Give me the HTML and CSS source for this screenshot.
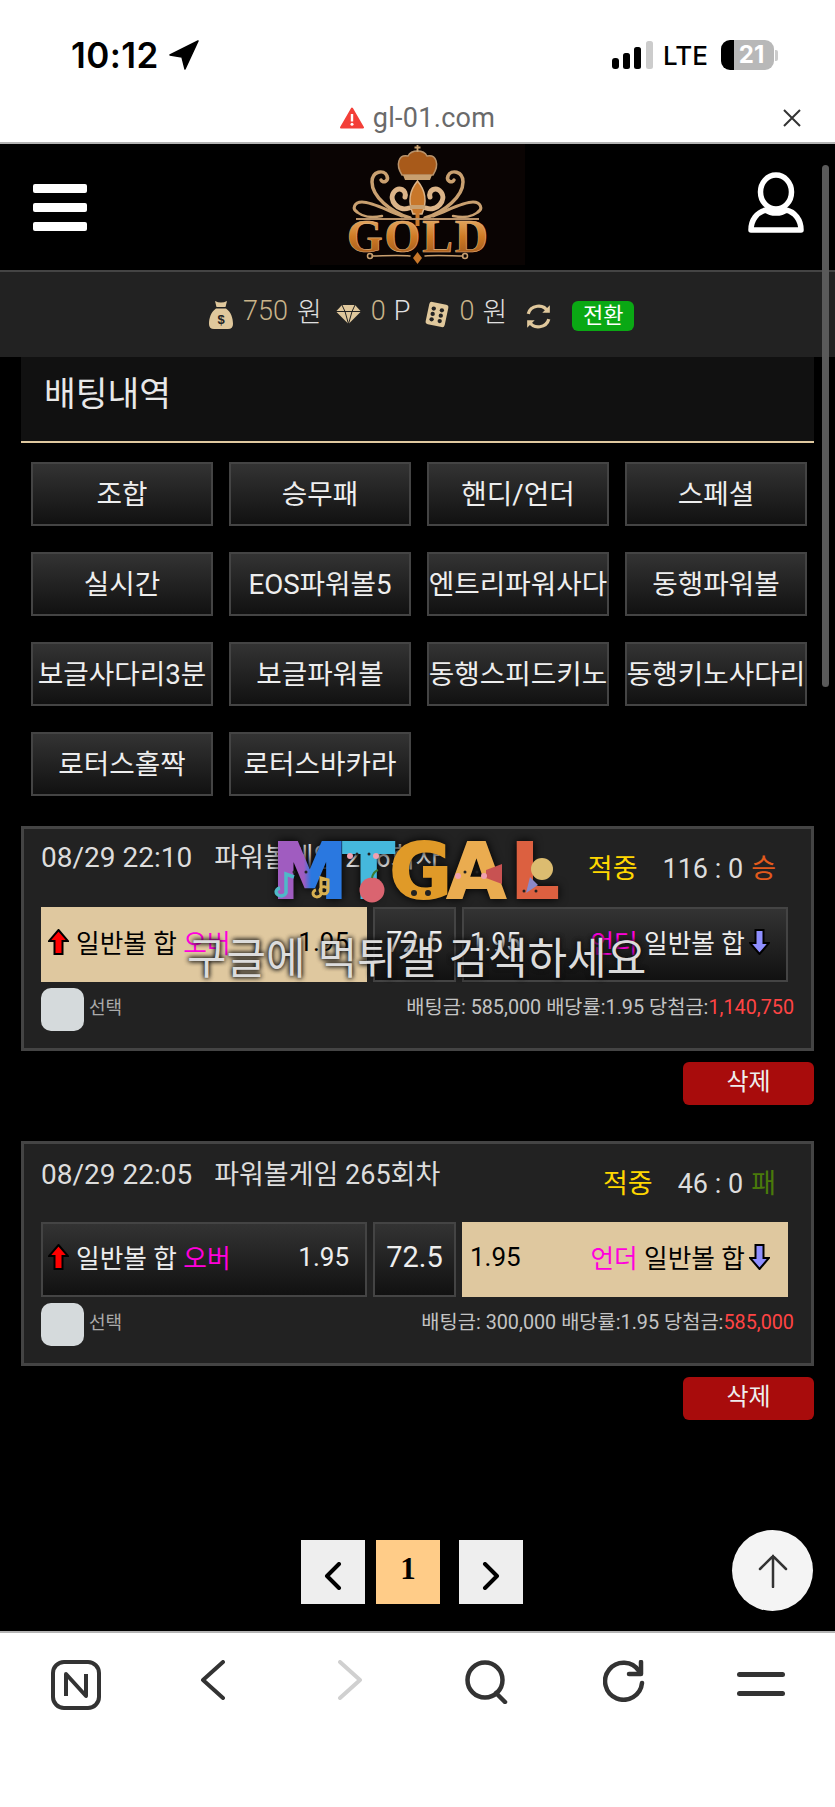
FILE: index.html

```html
<!DOCTYPE html>
<html lang="ko">
<head>
  <meta charset="UTF-8" />
  <meta name="viewport" content="width=device-width, initial-scale=1.0" />
  <title>배팅내역</title>
  <link rel="stylesheet" href="styles.css">
</head>
<body>
  <!-- PHONE STATUS BAR -->
  <div class="status">
    <div class="clock">
      <span>10:12</span>
      <svg width="30" height="30" viewBox="0 0 30 30"><path d="M29 1 L1 15 L13 17 L16 29 Z" fill="#000" stroke="#000" stroke-width="1.5" stroke-linejoin="round"/></svg>
    </div>
    <div class="status-right">
      <svg width="42" height="28" viewBox="0 0 42 28">
        <rect x="0" y="17" width="7" height="11" rx="3" fill="#000"/>
        <rect x="11" y="12" width="7" height="16" rx="2.5" fill="#000"/>
        <rect x="22" y="6" width="7" height="22" rx="2.5" fill="#000"/>
        <rect x="34" y="0" width="7" height="28" rx="2.5" fill="#ccc"/>
      </svg>
      <span class="lte">LTE</span>
      <div class="battery">21</div>
      <div class="battery-nub"></div>
    </div>
  </div>

  <!-- URL BAR -->
  <div class="urlbar">
    <div></div>
    <div class="url">
      <svg width="24" height="22" viewBox="0 0 24 22"><path d="M12 1.5 L23 20.5 H1 Z" fill="#f33f38" stroke="#f33f38" stroke-width="2" stroke-linejoin="round"/><rect x="10.8" y="7" width="2.4" height="7.5" fill="#fff"/><circle cx="12" cy="17.2" r="1.5" fill="#fff"/></svg>
      <span>gl-01.com</span>
    </div>
    <svg class="url-close" width="20" height="20" viewBox="0 0 20 20"><path d="M2 2 L18 18 M18 2 L2 18" stroke="#333" stroke-width="2" fill="none"/></svg>
  </div>

  <!-- HEADER -->
  <div class="topbar">
    <div class="burger"><i></i><i></i><i></i></div>
    <svg class="logo" width="215" height="121" viewBox="0 0 215 121">
      <defs>
        <linearGradient id="goldText" x1="0" y1="0" x2="0" y2="1">
          <stop offset="0" stop-color="#eebc7c"/>
          <stop offset="0.5" stop-color="#cf7a24"/>
          <stop offset="1" stop-color="#95501a"/>
        </linearGradient>
        <g id="scroll" fill="none" stroke="#c9a070" stroke-linecap="round">
          <path d="M100 74 C80 68 62 52 62 38 C62 27 74 25 77 32 C79 37 73 40 71 36" stroke-width="3.5"/>
          <path d="M92 72 C76 66 62 58 52 58 C44 58 42 65 47 68" stroke-width="3"/>
          <path d="M99 64 C88 68 78 56 84 48 C89 42 97 46 95 53" stroke="#dcb488" stroke-width="5"/>
          <path d="M72 72 C62 74 52 74 45 66" stroke-width="2.5"/>
          <path d="M100 112 C88 111 72 112 62 112" stroke-width="1.5"/>
          <circle cx="60" cy="112" r="2.5" stroke-width="1.5"/>
        </g>
      </defs>
      <rect width="215" height="121" fill="#0a0403"/>
      <use href="#scroll"/>
      <use href="#scroll" transform="translate(215 0) scale(-1 1)"/>
      <path d="M92 31 C85 20 89 10 98 12 C100 8 104 7 107.5 7 C111 7 115 8 117 12 C126 10 130 20 123 31 Z" fill="#a85a1a" stroke="#b8926a" stroke-width="1.5"/>
      <path d="M93 31 H122 L120 36 H95 Z" fill="#c8a070"/>
      <path d="M107.5 1 V8 M104.5 3.5 H110.5" stroke="#c8a070" stroke-width="1.8"/>
      <path d="M107.5 37 C99 47 98 58 103 70 H112 C117 58 116 47 107.5 37 Z" fill="#c8772a" stroke="#dcb488" stroke-width="1.5"/>
      <rect x="100" y="61" width="15" height="4" fill="#c8a070"/>
      <path d="M107.5 66 V82" stroke="#c8772a" stroke-width="4"/>
      <path d="M46 75 H169" stroke="#b8926a" stroke-width="2"/>
      <text x="37" y="108" textLength="141" font-family="'Liberation Serif', serif" font-weight="700" font-size="46" fill="url(#goldText)" stroke="#e2b27c" stroke-width="0.6">GOLD</text>
      <path d="M107.5 108 L112 114 L107.5 120 L103 114 Z" fill="#c8772a"/>
    </svg>
    <svg class="user" width="56" height="62" viewBox="0 0 56 62" fill="none" stroke="#fff" stroke-width="5.5">
      <ellipse cx="28" cy="20" rx="15.5" ry="17"/>
      <path d="M18 38 C9 40 3 48 3 58 H53 C53 48 47 40 38 38 C33 42 23 42 18 38 Z" stroke-linejoin="round"/>
    </svg>
  </div>

  <!-- BALANCE -->
  <div class="balance">
    <svg width="24" height="29" viewBox="0 0 24 29"><path d="M6 1 Q12 4 18 1 L16.5 7 H7.5 Z M7 8.5 H17 C22 12 24 18 24 24 Q24 29 19 29 H5 Q0 29 0 24 C0 18 2 12 7 8.5 Z" fill="#e0c89c"/><text x="12" y="24" text-anchor="middle" font-family="'Liberation Sans', sans-serif" font-size="13" font-weight="700" fill="#222">$</text></svg>
    <span class="amount amount-money">750</span><span class="unit unit-money">원</span>
    <svg class="ico-gem" width="25" height="19" viewBox="0 0 25 19"><path d="M6 0 H19 L25 6.5 L12.5 19 L0 6.5 Z" fill="#e0c89c"/><path d="M0 6.5 H25 M6 0 L9 6.5 L12.5 19 L16 6.5 L19 0" stroke="#222" stroke-width="1" fill="none"/></svg>
    <span class="amount amount-point">0</span><span class="unit unit-point">P</span>
    <svg class="ico-die" width="26" height="27" viewBox="0 0 24 25"><rect x="3" y="2" width="18" height="21" rx="2.5" fill="#e0c89c" transform="rotate(12 12 12.5)"/><g fill="#222"><circle cx="9" cy="7" r="2"/><circle cx="16.5" cy="8.6" r="2"/><circle cx="8" cy="12" r="2"/><circle cx="15.5" cy="13.6" r="2"/><circle cx="7" cy="17" r="2"/><circle cx="14.5" cy="18.6" r="2"/></g></svg>
    <span class="amount amount-game">0</span><span class="unit unit-game">원</span>
    <svg class="ico-sync" width="27" height="27" viewBox="0 0 25 25" fill="none" stroke="#e0c89c" stroke-width="3"><path d="M3 10 C5 2 17 0 21 8"/><path d="M22 15 C20 23 8 25 4 17"/><path d="M23 2 V9 H16 Z M2 23 V16 H9 Z" fill="#e0c89c" stroke="none"/></svg>
    <button class="convert">전환</button>
  </div>

  <!-- TITLE + GAME TABS -->
  <div class="page-title">배팅내역</div>
  <div class="tabs">
    <a class="tab">조합</a>
    <a class="tab">승무패</a>
    <a class="tab">핸디/언더</a>
    <a class="tab">스페셜</a>
    <a class="tab">실시간</a>
    <a class="tab">EOS파워볼5</a>
    <a class="tab">엔트리파워사다</a>
    <a class="tab">동행파워볼</a>
    <a class="tab">보글사다리3분</a>
    <a class="tab">보글파워볼</a>
    <a class="tab">동행스피드키노</a>
    <a class="tab">동행키노사다리</a>
    <a class="tab">로터스홀짝</a>
    <a class="tab">로터스바카라</a>
  </div>

  <!-- BET 1 -->
  <div class="card card-first">
    <div class="card-head">
      <div class="game"><span class="game-date">08/29 22:10</span><span>파워볼게임 266회차</span></div>
      <div class="result"><span class="hit">적중</span><span class="score">116 : 0</span><span class="win">승</span></div>
    </div>
    <div class="bets">
      <div class="bet bet-on">
        <svg class="arrow" width="21" height="26" viewBox="0 0 21 26"><path d="M10.5 1 L20 12 H14.5 V25 H6.5 V12 H1 Z" fill="#f00" stroke="#000" stroke-width="2"/></svg>
        <span class="bet-name">일반볼 합 <em>오버</em></span>
        <span class="odds">1.95</span>
      </div>
      <div class="line">72.5</div>
      <div class="bet">
        <span class="odds odds-left">1.95</span>
        <span class="bet-name"><em>언더</em> 일반볼 합</span>
        <svg class="arrow" width="21" height="26" viewBox="0 0 21 26"><path d="M10.5 25 L20 14 H14.5 V1 H6.5 V14 H1 Z" fill="#8f8fff" stroke="#000" stroke-width="2"/></svg>
      </div>
    </div>
    <div class="card-foot">
      <span class="check"></span><span class="check-label">선택</span>
      <span class="info">배팅금: 585,000 배당률:1.95 당첨금:<b>1,140,750</b></span>
    </div>
  </div>
  <div class="card-actions"><button class="del">삭제</button></div>

  <!-- BET 2 -->
  <div class="card card-second">
    <div class="card-head">
      <div class="game"><span class="game-date">08/29 22:05</span><span>파워볼게임 265회차</span></div>
      <div class="result"><span class="hit">적중</span><span class="score">46 : 0</span><span class="lose">패</span></div>
    </div>
    <div class="bets">
      <div class="bet">
        <svg class="arrow" width="21" height="26" viewBox="0 0 21 26"><path d="M10.5 1 L20 12 H14.5 V25 H6.5 V12 H1 Z" fill="#f00" stroke="#000" stroke-width="2"/></svg>
        <span class="bet-name">일반볼 합 <em>오버</em></span>
        <span class="odds">1.95</span>
      </div>
      <div class="line">72.5</div>
      <div class="bet bet-on">
        <span class="odds odds-left">1.95</span>
        <span class="bet-name"><em>언더</em> 일반볼 합</span>
        <svg class="arrow" width="21" height="26" viewBox="0 0 21 26"><path d="M10.5 25 L20 14 H14.5 V1 H6.5 V14 H1 Z" fill="#8f8fff" stroke="#000" stroke-width="2"/></svg>
      </div>
    </div>
    <div class="card-foot">
      <span class="check"></span><span class="check-label">선택</span>
      <span class="info">배팅금: 300,000 배당률:1.95 당첨금:<b>585,000</b></span>
    </div>
  </div>
  <div class="card-actions"><button class="del">삭제</button></div>

  <!-- PAGINATION -->
  <div class="pager">
    <a class="page"><svg width="18" height="28" viewBox="0 0 18 28"><path d="M15 2 L3 14 L15 26" fill="none" stroke="#000" stroke-width="4" stroke-linecap="round" stroke-linejoin="round"/></svg></a>
    <a class="page page-now">1</a>
    <a class="page page-next"><svg width="18" height="28" viewBox="0 0 18 28"><path d="M3 2 L15 14 L3 26" fill="none" stroke="#000" stroke-width="4" stroke-linecap="round" stroke-linejoin="round"/></svg></a>
  </div>

  <!-- BROWSER TOOLBAR -->
  <div class="toolbar">
    <svg width="50" height="50" viewBox="0 0 50 50" fill="none" stroke="#333" stroke-width="4"><rect x="2" y="2" width="46" height="46" rx="11"/><path d="M15 36 V14 L35 36 V14" stroke-width="4" stroke-linejoin="round"/></svg>
    <svg width="26" height="40" viewBox="0 0 26 40" fill="none" stroke="#333" stroke-width="4" stroke-linecap="round" stroke-linejoin="round"><path d="M23 2 L3 20 L23 38"/></svg>
    <svg width="26" height="40" viewBox="0 0 26 40" fill="none" stroke="#d0d0d0" stroke-width="4" stroke-linecap="round" stroke-linejoin="round"><path d="M3 2 L23 20 L3 38"/></svg>
    <svg width="44" height="44" viewBox="0 0 44 44" fill="none" stroke="#333" stroke-width="4.5" stroke-linecap="round"><circle cx="20" cy="20" r="17.5"/><path d="M31 33 L40 42"/></svg>
    <svg width="42" height="42" viewBox="0 0 42 42" fill="none" stroke="#333" stroke-width="4.5" stroke-linecap="round"><path d="M36 11 A18.5 18.5 0 1 0 39 23"/><path d="M38 2 V14 H26" stroke-linejoin="round"/></svg>
    <div class="menu-lines"><i></i><i></i></div>
  </div>

  <!-- THINGS LYING OVER THE PAGE -->
  <div class="scrollbar"></div>
  <a class="to-top"><svg width="30" height="34" viewBox="0 0 30 34" fill="none" stroke="#333" stroke-width="2.5" stroke-linecap="round"><path d="M15 33 V2 M2 15 L15 2 L28 15"/></svg></a>

  <div class="mark">
    <span class="mark-m">M</span><span class="mark-t">T</span><span class="mark-g">G</span><span class="mark-a">A</span><span class="mark-l">L</span>
  </div>
  <svg class="mark-art" width="290" height="70" viewBox="0 0 290 70">
    <path d="M8 50 a5 4 0 1 0 6 3 V36 l8 3" fill="none" stroke="#4fb8c8" stroke-width="3.5"/>
    <path d="M44 52 a4 3.5 0 1 0 5 3 V40 l7 2 V52 a4 3.5 0 1 1 -1 -2" fill="none" stroke="#d8b050" stroke-width="3"/>
    <circle cx="100" cy="52" r="12.5" fill="#da6470"/>
    <path d="M100 40 q1 -6 6 -8" stroke="#3e7a30" stroke-width="2" fill="none"/>
    <path d="M214 32 L230 26 V46 L214 40 Z" fill="#c85252"/>
    <circle cx="270" cy="31" r="11" fill="#dcbc70"/>
    <path d="M258 39 L266 47 L254 55 Z" fill="#8a88c8"/>
    <g fill="#222">
      <circle cx="22" cy="34" r="1.5"/><circle cx="34" cy="34" r="1.5"/>
      <circle cx="85" cy="16" r="1.5"/><circle cx="97" cy="16" r="1.5"/>
      <circle cx="193" cy="34" r="1.5"/><circle cx="205" cy="34" r="1.5"/>
      <circle cx="252" cy="53" r="1.5"/><circle cx="264" cy="53" r="1.5"/>
      <circle cx="142" cy="55" r="3"/><circle cx="156" cy="55" r="3"/>
    </g>
    <g fill="#f0a0b0">
      <circle cx="78" cy="18" r="3"/><circle cx="104" cy="18" r="3"/>
      <circle cx="186" cy="38" r="3"/><circle cx="212" cy="38" r="3"/>
    </g>
  </svg>
  <div class="watermark">구글에 먹튀갤 검색하세요</div>
</body>
</html>
```

FILE: styles.css

```css
* {
  box-sizing: border-box;
}
html, body {
  margin: 0;
  padding: 0;
}
body {
  position: relative;
  width: 835px;
  height: 1807px;
  overflow: hidden;
  background: #000;
  color: #ddd;
  font-family: Roboto, "Noto Sans CJK KR", sans-serif;
}

/* status bar */
.status {
  height: 96px;
  padding: 14px 57px 0 71px;
  background: #fff;
  color: #000;
  display: flex;
  justify-content: space-between;
  align-items: center;
}
.clock {
  display: flex;
  align-items: center;
  gap: 10px;
  font-family: Inter, sans-serif;
  font-weight: 600;
  font-size: 35px;
  letter-spacing: 0.4px;
}
.status-right {
  display: flex;
  align-items: center;
}
.lte {
  margin: 0 13px 0 9px;
  font-family: Inter, sans-serif;
  font-weight: 500;
  font-size: 26px;
}
.battery {
  width: 53px;
  height: 30px;
  border-radius: 9px;
  background: linear-gradient(90deg, #000 24%, #b8b8b8 24%);
  color: #fff;
  font-family: Inter, sans-serif;
  font-weight: 700;
  font-size: 24px;
  line-height: 30px;
  text-align: center;
  padding-left: 8px;
}
.battery-nub {
  width: 3px;
  height: 11px;
  margin-left: 1px;
  border-radius: 0 2px 2px 0;
  background: #ccc;
}

/* url bar */
.urlbar {
  height: 48px;
  background: #fff;
  border-bottom: 2px solid #b4b4b4;
  display: grid;
  grid-template-columns: 1fr auto 1fr;
  align-items: center;
  padding-bottom: 3px;
}
.url {
  display: flex;
  align-items: center;
  gap: 9px;
  color: #6a6a6a;
  font-size: 27px;
  letter-spacing: 0.3px;
}
.url-close {
  justify-self: end;
  margin-right: 33px;
}

/* header */
.topbar {
  height: 126px;
  display: flex;
  justify-content: space-between;
  align-items: flex-start;
  background: #000;
}
.burger {
  width: 54px;
  margin: 40px 0 0 33px;
}
.burger i {
  display: block;
  height: 9px;
  margin-bottom: 10px;
  background: #fff;
  border-radius: 2px;
}
.user {
  margin: 28px 31px 0 0;
}

/* balance */
.balance {
  height: 87px;
  background: #222;
  border-top: 2px solid #444;
  padding-left: 209px;
  display: flex;
  align-items: center;
}
.amount {
  color: #c9b48a;
  font-weight: 300;
  font-size: 27px;
  margin-top: -8px;
}
.unit {
  color: #e0e0e0;
  font-weight: 300;
  font-size: 27px;
  margin-top: -8px;
}
.amount-money {
  margin-left: 10px;
}
.unit-money {
  margin-left: 9px;
}
.ico-gem {
  margin-left: 14px;
}
.amount-point {
  margin-left: 10px;
}
.unit-point {
  margin-left: 8px;
}
.ico-die {
  margin-left: 14px;
}
.amount-game {
  margin-left: 9px;
}
.unit-game {
  margin-left: 8px;
}
.ico-sync {
  margin-left: 18px;
  margin-top: 4px;
}
.convert {
  width: 62px;
  height: 30px;
  margin-left: 20px;
  margin-top: 2px;
  padding: 0;
  border: 0;
  border-radius: 6px;
  background: #0aa814;
  color: #fff;
  font-family: inherit;
  font-size: 22px;
  line-height: 30px;
}

/* title + tabs */
.page-title {
  height: 86px;
  margin: 0 21px;
  padding: 14px 0 0 23px;
  background: #111;
  border-bottom: 2px solid #dfc89f;
  color: #e8e8e8;
  font-size: 34.5px;
  line-height: 46px;
}
.tabs {
  display: grid;
  grid-template-columns: repeat(4, 182px);
  grid-auto-rows: 64px;
  gap: 26px 16px;
  padding: 19px 0 0 31px;
}
.tab {
  display: flex;
  align-items: center;
  justify-content: center;
  border: 2px solid #444;
  background: linear-gradient(#333, #111);
  color: #eee;
  font-size: 27.7px;
  white-space: nowrap;
  padding-bottom: 4px;
}

/* bet cards */
.card {
  height: 225px;
  margin: 0 21px;
  padding: 0 17px;
  background: #222;
  border: 3px solid #444;
}
.card-first {
  margin-top: 30px;
}
.card-second {
  margin-top: 36px;
}
.card-head {
  height: 78px;
  display: flex;
  justify-content: space-between;
  align-items: flex-start;
  padding-right: 18px;
}
.game {
  display: flex;
  gap: 22px;
  font-size: 27px;
  line-height: 40px;
  color: #ddd;
  margin-top: 9px;
}
.game-date {
  font-size: 28px;
}
.card-second .game {
  margin-top: 11px;
}
.result {
  display: flex;
  align-items: center;
  font-size: 27px;
  line-height: 40px;
  margin-top: 20px;
}
.hit {
  color: #ffd700;
  margin-right: 25px;
}
.score {
  color: #ddd;
  margin-right: 8px;
}
.win {
  color: #e25a1c;
}
.lose {
  color: #4a7a0a;
}
.bets {
  display: grid;
  grid-template-columns: 326px 83px 326px;
  gap: 6px;
  height: 75px;
}
.bet, .line {
  border: 2px solid #444;
  background: linear-gradient(#333, #111);
  color: #eee;
  display: flex;
  align-items: center;
}
.bet {
  padding: 0 16px 6px 5px;
  font-size: 25.7px;
}
.line {
  justify-content: center;
  padding-bottom: 6px;
  font-size: 29px;
}
.bet-on {
  background: #dfc89f;
  border-color: #dfc89f;
  color: #000;
}
.bet em {
  color: #ff00dc;
  font-style: normal;
}
.arrow {
  flex: none;
}
.bet-name {
  margin: 0 4px 0 7px;
}
.odds {
  margin-left: auto;
  font-size: 26px;
}
.odds-left {
  margin-left: 0;
  margin-right: auto;
  padding-left: 1px;
}
.card-foot {
  display: flex;
  align-items: flex-start;
  padding-top: 6px;
}
.check {
  width: 43px;
  height: 43px;
  border-radius: 10px;
  background: #d5dadc;
}
.check-label {
  margin-left: 5px;
  font-size: 18px;
  line-height: 40px;
  color: #aaa;
}
.info {
  margin-left: auto;
  font-size: 19.8px;
  line-height: 40px;
  color: #c4c4c4;
}
.info b {
  font-weight: 400;
  color: #f44;
}
.card-actions {
  display: flex;
  justify-content: flex-end;
  margin: 11px 21px 0 0;
}
.del {
  width: 131px;
  height: 43px;
  padding: 0 0 9px;
  border: 0;
  border-radius: 6px;
  background: #a80c0c;
  color: #eee;
  font-family: inherit;
  font-size: 24px;
}

/* pagination */
.pager {
  display: flex;
  margin-top: 120px;
  padding-left: 301px;
  height: 64px;
}
.page {
  width: 64px;
  height: 64px;
  display: flex;
  align-items: center;
  justify-content: center;
  background: #eee;
  padding-top: 8px;
}
.page-now {
  margin: 0 19px 0 11px;
  background: #ffcc88;
  color: #000;
  font-family: "Liberation Serif", serif;
  font-weight: 700;
  font-size: 31px;
  padding: 0 0 6px;
}

/* browser toolbar */
.toolbar {
  height: 176px;
  margin-top: 27px;
  padding: 27px 0 0 7px;
  background: #fff;
  border-top: 2px solid #b4b4b4;
  display: grid;
  grid-template-columns: repeat(6, 137px);
  align-items: start;
  justify-items: center;
}
.menu-lines {
  width: 48px;
  padding-top: 12px;
}
.menu-lines i {
  display: block;
  height: 5px;
  margin-bottom: 14px;
  border-radius: 3px;
  background: #333;
}

/* over the page */
.scrollbar {
  position: absolute;
  left: 822px;
  top: 165px;
  width: 7px;
  height: 522px;
  border-radius: 4px;
  background: #5a5a5a;
}
.to-top {
  position: absolute;
  left: 732px;
  top: 1530px;
  width: 81px;
  height: 81px;
  border-radius: 50%;
  background: #f4f4f4;
  display: flex;
  align-items: center;
  justify-content: center;
}
.mark {
  position: absolute;
  left: 272px;
  top: 826px;
  display: flex;
  font-family: "DejaVu Sans", sans-serif;
  font-weight: 700;
  font-size: 76px;
  line-height: 92px;
  letter-spacing: -5px;
  filter: drop-shadow(0 0 5px #000);
}
.mark-m {
  background: linear-gradient(90deg, #a05cc0 45%, #2a78e0 55%);
  -webkit-background-clip: text;
  background-clip: text;
  color: transparent;
  -webkit-text-stroke: 2px transparent;
}
.mark-t {
  color: #45b8dc;
  -webkit-text-stroke: 2px #45b8dc;
}
.mark-g {
  color: #e09a28;
  -webkit-text-stroke: 2px #e09a28;
}
.mark-a {
  color: #eaac50;
  -webkit-text-stroke: 2px #eaac50;
}
.mark-l {
  color: #dc6040;
  -webkit-text-stroke: 2px #dc6040;
  margin-left: 10px;
}
.mark-art {
  position: absolute;
  left: 272px;
  top: 838px;
}
.watermark {
  position: absolute;
  left: 187px;
  top: 925px;
  font-family: "Noto Sans CJK KR", sans-serif;
  font-size: 43px;
  line-height: 60px;
  white-space: nowrap;
  color: #dcdcdc;
  text-shadow: 0 0 5px #111, 0 0 5px #111;
}
```
